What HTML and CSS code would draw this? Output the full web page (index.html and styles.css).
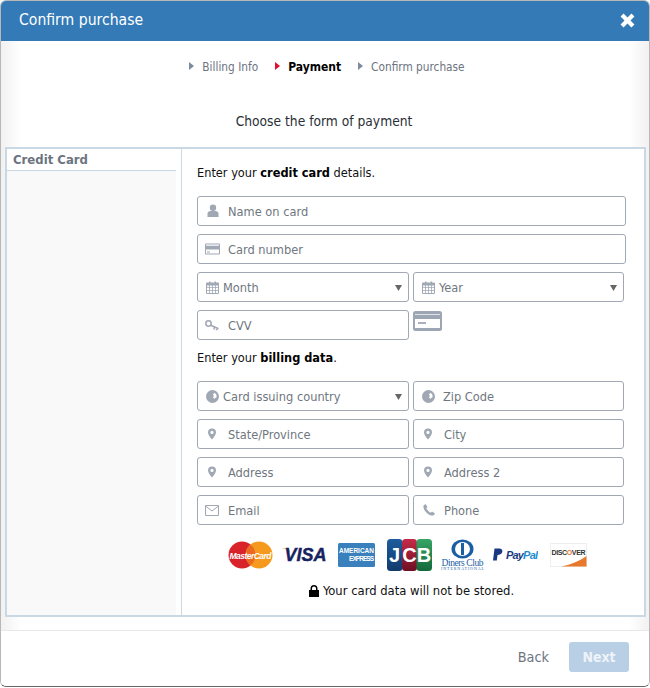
FILE: index.html
```html
<!DOCTYPE html>
<html lang="en">
<head>
<meta charset="utf-8">
<title>Confirm purchase</title>
<link rel="stylesheet" href="styles.css">
</head>
<body>
<svg class="defs" width="0" height="0" aria-hidden="true">
  <defs>
    <linearGradient id="g-blue" x1="0" y1="0" x2="0" y2="1"><stop offset="0" stop-color="#1d5c9e"/><stop offset="1" stop-color="#123a6c"/></linearGradient>
    <linearGradient id="g-red" x1="0" y1="0" x2="0" y2="1"><stop offset="0" stop-color="#c62a48"/><stop offset="1" stop-color="#6e0f22"/></linearGradient>
    <linearGradient id="g-green" x1="0" y1="0" x2="0" y2="1"><stop offset="0" stop-color="#37a566"/><stop offset="1" stop-color="#14683a"/></linearGradient>
  </defs>
  <symbol id="i-user" viewBox="0 0 14 14"><circle cx="7" cy="3.8" r="3.200"/><path d="M1.500 13V9.800C1.500 8 3 7 4.600 7h4.800c1.600 0 3.100 1 3.100 2.800V13z"/></symbol>
  <symbol id="i-card" viewBox="0 0 15 12"><path fill-rule="evenodd" d="M1 .5h13a1 1 0 0 1 1 1v9a1 1 0 0 1-1 1H1a1 1 0 0 1-1-1v-9a1 1 0 0 1 1-1zM1 1.500v1.200h13V1.500zM1 6.500v4h13v-4zM2 8.600h3v.8H2z"/></symbol>
  <symbol id="i-cal" viewBox="0 0 13 13"><path fill-rule="evenodd" d="M1 1.500h2V.5h1.500v1h4v-1H10v1h2a1 1 0 0 1 1 1V12a1 1 0 0 1-1 1H1a1 1 0 0 1-1-1V2.500a1 1 0 0 1 1-1zM1 4.500v1.800h2.200V4.500zm3 0v1.800h2.100V4.500zm2.900 0v1.800H9V4.500zm2.900 0v1.800H12V4.500zM1 7.100v1.900h2.200V7.100zm3 0v1.900h2.100V7.100zm2.900 0v1.900H9V7.100zm2.900 0v1.900H12V7.100zM1 9.800V12h2.200V9.800zm3 0V12h2.100V9.800zm2.900 0V12H9V9.800zm2.900 0V12H12V9.800z"/></symbol>
  <symbol id="i-key" viewBox="0 0 14 11"><g fill="none" stroke="currentColor" stroke-width="1.500"><circle cx="3.500" cy="3.500" r="2.700"/><path d="M5.800 5.300 13.500 8.700M9 6.700v2.800M11.500 7.800v2.400"/></g></symbol>
  <symbol id="i-globe" viewBox="0 0 14 14"><path fill-rule="evenodd" d="M7 0a7 7 0 1 1 0 14A7 7 0 0 1 7 0zM9 3 7.500 5 8.500 6.500 7.500 8 9 9.500 11.500 7.500 11 4.500z"/></symbol>
  <symbol id="i-pin" viewBox="0 0 10 14"><path fill-rule="evenodd" d="M5 0a5 5 0 0 1 5 5c0 3-3 6-5 9-2-3-5-6-5-9a5 5 0 0 1 5-5zm0 3a2 2 0 1 0 0 4 2 2 0 0 0 0-4z"/></symbol>
  <symbol id="i-mail" viewBox="0 0 14 11"><path fill="none" stroke="currentColor" d="M.5.5h13v10H.5zM.5 1l6.500 5 6.500-5"/></symbol>
  <symbol id="i-phone" viewBox="0 0 12 12"><path d="M2.500 0 4.500 3 3.300 4.300C4 6 6 8 7.700 8.700L9 7.500l3 2-1.500 2C6 12.500-.5 6 .5 1.500z"/></symbol>
  <symbol id="i-caret" viewBox="0 0 8 8"><path d="M0 1h8L4 8z"/></symbol>
</svg>

<div class="modal">
  <header class="modal-head">
    <h1 class="modal-title">Confirm purchase</h1>
    <svg class="close" viewBox="0 0 14 14" aria-label="Close"><path d="M.5 3.300 3.300.5 7 4.200 10.700.5 13.500 3.300 9.800 7 13.500 10.700 10.700 13.500 7 9.800 3.300 13.500.5 10.700 4.200 7z"/></svg>
  </header>

  <main class="modal-body">
    <ol class="steps">
      <li class="step">Billing Info</li>
      <li class="step step-active">Payment</li>
      <li class="step">Confirm purchase</li>
    </ol>
    <h2 class="choose">Choose the form of payment</h2>

    <section class="panel">
      <aside class="tabs">
        <div class="tab">Credit Card</div>
      </aside>
      <div class="form">
        <p class="lead lead-card">Enter your <b>credit card</b> details.</p>
        <div class="rows">
          <div class="field field-wide"><svg class="ico ico-user"><use href="#i-user"/></svg><span>Name on card</span></div>
          <div class="field field-wide"><svg class="ico ico-card"><use href="#i-card"/></svg><span>Card number</span></div>
          <div class="pair">
            <div class="field select"><svg class="ico ico-cal"><use href="#i-cal"/></svg><span>Month</span><svg class="caret"><use href="#i-caret"/></svg></div>
            <div class="field select"><svg class="ico ico-cal"><use href="#i-cal"/></svg><span>Year</span><svg class="caret"><use href="#i-caret"/></svg></div>
          </div>
          <div class="pair">
            <div class="field"><svg class="ico ico-key"><use href="#i-key"/></svg><span>CVV</span></div>
            <div class="cvv-cell">
              <svg class="cvv" viewBox="0 0 29 20"><rect width="29" height="20" rx="2.500" fill="#9ca6b5"/><rect x="2" y="8" width="25" height="9" fill="#fff"/><rect x="2" y="3" width="25" height="1" fill="#dfe3e8"/><rect x="5" y="11" width="8" height="2" fill="#a9b1bd"/></svg>
            </div>
          </div>
        </div>
        <p class="lead lead-billing">Enter your <b>billing data</b>.</p>
        <div class="rows">
          <div class="pair">
            <div class="field select"><svg class="ico ico-globe"><use href="#i-globe"/></svg><span>Card issuing country</span><svg class="caret"><use href="#i-caret"/></svg></div>
            <div class="field"><svg class="ico ico-globe"><use href="#i-globe"/></svg><span>Zip Code</span></div>
          </div>
          <div class="pair">
            <div class="field"><svg class="ico ico-pin"><use href="#i-pin"/></svg><span>State/Province</span></div>
            <div class="field"><svg class="ico ico-pin"><use href="#i-pin"/></svg><span>City</span></div>
          </div>
          <div class="pair">
            <div class="field"><svg class="ico ico-pin"><use href="#i-pin"/></svg><span>Address</span></div>
            <div class="field"><svg class="ico ico-pin"><use href="#i-pin"/></svg><span>Address 2</span></div>
          </div>
          <div class="pair">
            <div class="field"><svg class="ico ico-mail"><use href="#i-mail"/></svg><span>Email</span></div>
            <div class="field"><svg class="ico ico-phone"><use href="#i-phone"/></svg><span>Phone</span></div>
          </div>
        </div>

        <div class="logos">
          <svg class="logo" width="45" height="28" viewBox="0 0 45 28"><circle cx="14" cy="14" r="13.500" fill="#d8232a"/><circle cx="31" cy="14" r="13.500" fill="#f59a1f"/><path d="M22.500 3.500a13.500 13.500 0 0 1 0 21 13.500 13.500 0 0 1 0-21z" fill="#ea6a20"/><text x="22.500" y="17.500" class="lg-mc" textLength="42">MasterCard</text></svg>
          <svg class="logo" width="44" height="24" viewBox="0 0 44 24"><path d="M0 5c3.500-.5 6.500 1 8.500 4C6.500 7.500 3.500 6 0 5z" fill="#f2a51f"/><text x="23.500" y="18" class="lg-visa">VISA</text></svg>
          <svg class="logo logo-spaced" width="37" height="24" viewBox="0 0 37 24"><rect width="37" height="24" rx="1.500" fill="#3a80bd"/><text x="1" y="10" class="lg-ax" textLength="35">AMERICAN</text><text x="11" y="18" class="lg-ax" textLength="25">EXPRESS</text></svg>
          <svg class="logo logo-spaced" width="45" height="32" viewBox="0 0 45 32"><rect x="0" width="15.500" height="32" rx="3.500" fill="url(#g-blue)"/><rect x="15" width="15" height="32" rx="3.500" fill="url(#g-red)"/><rect x="29.500" width="15.500" height="32" rx="3.500" fill="url(#g-green)"/><text x="7.500" y="23" class="lg-jcb">J</text><text x="22.500" y="23" class="lg-jcb">C</text><text x="37" y="23" class="lg-jcb">B</text></svg>
          <svg class="logo" width="43" height="32" viewBox="0 0 43 32"><ellipse cx="21.500" cy="10" rx="11" ry="9.500" fill="#1a5ea3"/><ellipse cx="21.500" cy="10" rx="7.500" ry="7" fill="#fff"/><rect x="20" y="4" width="3" height="12" fill="#1a5ea3"/><text x="21.500" y="26.500" class="lg-dc" textLength="42">Diners Club</text><text x="21.500" y="31" class="lg-dc2" textLength="43">INTERNATIONAL</text></svg>
          <svg class="logo" width="45" height="14" viewBox="0 0 45 14"><path d="M1.500 .5h5c3.500 0 4 4.500.5 6L4.500 7l-.7 5.500H0z" fill="#193a82"/><text x="13" y="11" class="lg-pp" textLength="32"><tspan fill="#193a82">Pay</tspan><tspan fill="#1f8ed0">Pal</tspan></text></svg>
          <svg class="logo logo-spaced" width="37" height="24" viewBox="0 0 37 24"><rect x=".5" y=".5" width="36" height="23" fill="#fff" stroke="#eee"/><path d="M11 23.500C20 22 30 18 36.500 13v10.500z" fill="#e8782b"/><text x="18.500" y="12" class="lg-disc" textLength="34">DISC<tspan fill="#e8782b">O</tspan>VER</text></svg>
        </div>

        <p class="secure">
          <svg class="lock" viewBox="0 0 10 12"><path fill-rule="evenodd" d="M5 0a3.500 3.500 0 0 1 3.500 3.500V5H10v7H0V5h1.500V3.500A3.500 3.500 0 0 1 5 0zm0 1.500a2 2 0 0 0-2 2V5h4V3.500a2 2 0 0 0-2-2z"/></svg>
          Your card data will not be stored.
        </p>
      </div>
    </section>
  </main>

  <footer class="modal-foot">
    <button class="btn-back" type="button">Back</button>
    <button class="btn-next" type="button">Next</button>
  </footer>
</div>
</body>
</html>
```
FILE: styles.css
```css
* { box-sizing: border-box; }
html, body { margin: 0; padding: 0; }
body {
  width: 650px;
  height: 688px;
  background: #fff;
  font-family: "DejaVu Sans", sans-serif;
  font-stretch: condensed;
  font-size: 13px;
  color: #111;
}
.defs { position: absolute; }

.modal {
  width: 650px;
  height: 687px;
  display: flex;
  flex-direction: column;
  background: #fff;
  border: 1px solid #b8b8b8;
  border-bottom-color: #666;
  border-radius: 6px;
  overflow: hidden;
}
.modal-head {
  height: 40px;
  flex: none;
  display: flex;
  align-items: center;
  justify-content: space-between;
  padding: 0 14px 2px 18px;
  background: #337ab7;
  color: #fff;
}
.modal-title { margin: 0; font-size: 15.600px; font-weight: 400; }
.close { width: 15px; height: 15px; fill: #fff; }

.modal-body {
  flex: none;
  height: 589px;
  padding: 0 4px;
  display: flex;
  flex-direction: column;
  background: linear-gradient(to right, #f1f1f1, #fff 20px, #fff calc(100% - 20px), #f1f1f1);
}
.steps {
  list-style: none;
  margin: 18px 0 0;
  padding: 0 0 0 4px;
  height: 16px;
  display: flex;
  justify-content: center;
  gap: 17px;
  font-size: 11.750px;
  line-height: 16px;
  color: #6c7480;
}
.step { position: relative; padding-left: 13px; }
.step::before {
  content: "";
  position: absolute;
  left: 0;
  top: 3px;
  border-left: 5px solid #7d8ba0;
  border-top: 4px solid transparent;
  border-bottom: 4px solid transparent;
}
.step-active { color: #000; font-weight: 700; font-size: 12px; }
.step-active::before { border-left-color: #e0102c; }

.choose {
  margin: 0;
  padding: 37px 2px 0 0;
  height: 72px;
  text-align: center;
  font-size: 13.700px;
  line-height: 18px;
  font-weight: 400;
  color: #2a2f36;
}
.panel {
  height: 470px;
  width: 641px;
  display: flex;
  border: 2px solid #c9d8e2;
  background: #fff;
}
.tabs {
  width: 175px;
  flex: none;
  border-right: 1px solid #c9d8e2;
  padding-right: 5px;
  background: linear-gradient(#f9f9f9, #f9f9f9) no-repeat 0 0 / 169px 100%;
}
.tab {
  height: 22px;
  padding: 1px 0 0 6px;
  font-size: 13px;
  line-height: 20px;
  font-weight: 700;
  color: #6c7480;
  background: #fff;
  border-bottom: 1px solid #c9d8e2;
}
.form { flex: 1; padding: 16px 0 0 15px; }
.lead { margin: 0; font-size: 12.650px; line-height: 16px; color: #111; }
.lead b { color: #000; }
.lead-card { height: 31px; }
.lead-billing { padding-top: 10px; height: 41px; }
.rows { display: flex; flex-direction: column; gap: 8px; }
.pair { display: flex; gap: 4px; }
.field {
  flex: none;
  width: 212px;
  height: 30px;
  display: flex;
  align-items: center;
  padding-left: 8px;
  border: 1px solid #a0a8b4;
  border-radius: 3px;
  font-size: 12.700px;
  color: #6f7780;
  background: #fff;
}
.field-wide { width: 429px; }
.pair .field:nth-child(2) { width: 211px; }
.ico { flex: none; fill: #a0a8b4; color: #a0a8b4; margin-right: 8px; }
.ico-user { width: 14px; height: 14px; }
.ico-card { width: 15px; height: 12px; margin-left: -1px; margin-right: 8px; }
.ico-cal { width: 13px; height: 13px; margin-right: 4px; }
.ico-key { width: 14px; height: 11px; margin-left: -1px; margin-right: 9px; }
.ico-globe { width: 13px; height: 13px; margin-right: 4px; }
.field:not(.select) > .ico-globe { margin-right: 8px; }
.ico-pin { width: 8px; height: 12px; margin: 0 12px 0 2px; }
.ico-mail { width: 14px; height: 11px; margin-left: -1px; margin-right: 9px; }
.ico-phone { width: 12px; height: 12px; margin: 0 9px 0 1px; }
.caret { width: 7px; height: 7px; margin-left: auto; margin-right: 6px; fill: #666; }
.cvv-cell { height: 30px; }
.cvv { display: block; width: 29px; height: 20px; margin-top: 1px; }

.logos {
  display: flex;
  align-items: center;
  gap: 9px;
  height: 32px;
  margin-top: 14px;
  padding-left: 31px;
}
.logo { flex: none; display: block; }
.logo-spaced { margin-left: 3px; }
.logo text { font-family: "Liberation Sans", sans-serif; }
.lg-mc { font-size: 8.500px; font-weight: 700; font-style: italic; fill: #fff; text-anchor: middle; }
.lg-visa { font-size: 18px; font-weight: 700; font-style: italic; fill: #17235f; stroke: #17235f; stroke-width: .4px; text-anchor: middle; }
.lg-ax { font-size: 6.500px; font-weight: 700; fill: #fff; }
.lg-jcb { font-size: 20px; font-weight: 700; fill: #fff; text-anchor: middle; }
.logo .lg-dc { font-size: 9.500px; fill: #1a5ea3; text-anchor: middle; font-family: "Liberation Serif", serif; }
.logo .lg-dc2 { font-size: 4px; fill: #1a5ea3; text-anchor: middle; font-family: "Liberation Serif", serif; }
.lg-pp { font-size: 11px; font-weight: 700; font-style: italic; }
.lg-disc { font-size: 7px; font-weight: 700; fill: #333; text-anchor: middle; }

.secure {
  margin: 11px 0 0;
  height: 18px;
  display: flex;
  justify-content: center;
  align-items: center;
  gap: 4px;
  font-size: 12.900px;
  line-height: 18px;
  color: #111;
  width: 429px;
}
.lock { width: 10px; height: 12px; fill: #000; }

.modal-foot {
  flex: 1;
  display: flex;
  justify-content: flex-end;
  align-items: flex-start;
  padding: 11px 20px 0 0;
  border-top: 1px solid #e8e8e8;
  background: #fff;
  gap: 20px;
}
.btn-back, .btn-next {
  font-family: inherit;
  font-stretch: inherit;
  font-size: 14.300px;
  border: 0;
  padding: 0;
  height: 30px;
  background: none;
}
.btn-back { color: #6c7480; }
.btn-next {
  width: 60px;
  border-radius: 3px;
  background: #b8cfe5;
  color: #eef3f8;
  font-weight: 700;
  font-size: 14px;
}
```
